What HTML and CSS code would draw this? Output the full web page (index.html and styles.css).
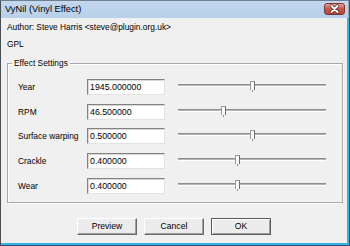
FILE: index.html
```html
<!DOCTYPE html>
<html lang="en">
<head>
    <meta charset="UTF-8">
    <title>VyNil (Vinyl Effect)</title>
    <link rel="stylesheet" href="styles.css">
</head>
<body>
    <div class="frame">
        <div class="titlebar">
            <span class="title">VyNil (Vinyl Effect)</span>
            <span class="close">
                <svg width="21" height="12" viewBox="0 0 21 12">
                    <path d="M7.5 3 L13.5 9 M13.5 3 L7.5 9" stroke="#5a2a26" stroke-width="3.4" stroke-linecap="round"/>
                    <path d="M7.5 3 L13.5 9 M13.5 3 L7.5 9" stroke="#ffffff" stroke-width="2" stroke-linecap="round"/>
                </svg>
            </span>
        </div>

        <div class="client">
            <div class="info">Author: Steve Harris &lt;steve@plugin.org.uk&gt;</div>
            <div class="info">GPL</div>

            <fieldset class="group">
                <legend>Effect Settings</legend>

                <div class="row">
                    <label>Year</label>
                    <div class="edit">1945.000000</div>
                    <div class="slider"><div class="track"></div><div class="thumb" style="left: 72px"></div></div>
                </div>
                <div class="row">
                    <label>RPM</label>
                    <div class="edit">46.500000</div>
                    <div class="slider"><div class="track"></div><div class="thumb" style="left: 43px"></div></div>
                </div>
                <div class="row">
                    <label>Surface warping</label>
                    <div class="edit">0.500000</div>
                    <div class="slider"><div class="track"></div><div class="thumb" style="left: 72px"></div></div>
                </div>
                <div class="row">
                    <label>Crackle</label>
                    <div class="edit">0.400000</div>
                    <div class="slider"><div class="track"></div><div class="thumb" style="left: 57px"></div></div>
                </div>
                <div class="row">
                    <label>Wear</label>
                    <div class="edit">0.400000</div>
                    <div class="slider"><div class="track"></div><div class="thumb" style="left: 57px"></div></div>
                </div>
            </fieldset>

            <div class="buttons">
                <button class="btn">Preview</button>
                <button class="btn">Cancel</button>
                <button class="btn default">OK</button>
            </div>
        </div>
    </div>
</body>
</html>
```

FILE: styles.css
```css
body {
    margin: 0;
    font-family: "Liberation Sans", Arial, sans-serif;
    font-size: 8.4px;
    color: #000;
    background: #f0f0f0;
}

.frame {
    width: 350px;
    height: 246px;
    box-sizing: border-box;
    border-left: 1px solid #4a4f55;
    border-top: 1px solid #6f7f90;
    border-right: 1px solid #2a5570;
    border-bottom: 1px solid #2a5570;
    display: flex;
    flex-direction: column;
}

.titlebar {
    height: 17px;
    display: flex;
    align-items: center;
    justify-content: space-between;
    padding: 0 3px 0 4px;
    background: linear-gradient(to bottom, #c3d7ee, #b8d0ea);
    border-right: 1px solid #98a8ba;
}

.title {
    font-size: 9.3px;
    margin-top: -1px;
}

.close {
    width: 21px;
    height: 12px;
    border-radius: 3px;
    border: 1px solid #7c3530;
    box-sizing: border-box;
    background: linear-gradient(to bottom, #e4a198, #c85a4e 45%, #b84437);
    display: flex;
    align-items: center;
    justify-content: center;
    margin-top: -1px;
}

.close svg {
    display: block;
    margin: -1px;
}

.client {
    flex: 1;
    padding: 0 4px 0 6px;
    background: #f0f0f0;
    border-right: 2px solid #33b2e3;
    border-bottom: 2px solid #33b2e3;
}

.info {
    line-height: 12px;
    margin-top: 3px;
}

.info + .info {
    margin-top: 5px;
}

.group {
    margin: 7px 0 0 0;
    padding: 6px 4px 4px 4px;
    border: 1px solid #a9a9a9;
    box-shadow: inset 1px 1px 0 #fff, 1px 1px 0 #fff;
}

.group legend {
    padding: 0 2px;
    line-height: 12px;
}

.row {
    height: 24.6px;
    display: flex;
    align-items: center;
    padding-left: 6px;
}

.row label {
    width: 69px;
}

.edit {
    width: 78px;
    height: 16px;
    box-sizing: border-box;
    background: #fff;
    border-top: 1px solid #828282;
    border-left: 1px solid #828282;
    border-right: 1px solid #e3e3e3;
    border-bottom: 1px solid #e3e3e3;
    box-shadow: inset 1px 1px 0 #d8d8d8;
    padding: 0 2px;
    line-height: 14px;
    font-size: 8.8px;
}

.slider {
    position: relative;
    width: 148px;
    height: 16px;
    margin-left: 13px;
}

.track {
    position: absolute;
    left: 0;
    right: 0;
    top: 5px;
    height: 1px;
    border-top: 1px solid #8e8e8e;
    border-bottom: 1px solid #ffffff;
    background: #b4b4b4;
}

.thumb {
    position: absolute;
    top: 2px;
    width: 3px;
    height: 8px;
    background: #fafafa;
    border: 1px solid #9a9a9a;
    border-right-color: #6e6e6e;
    border-bottom: none;
}

.thumb::after {
    content: "";
    position: absolute;
    left: 1px;
    top: 8px;
    width: 1px;
    height: 2px;
    background: #8a8a8a;
}

.buttons {
    display: flex;
    justify-content: center;
    gap: 7px;
    margin-top: 15px;
    padding-right: 2px;
}

.btn {
    width: 60px;
    height: 17px;
    padding: 0;
    font-family: inherit;
    font-size: 8.6px;
    color: #000;
    background: #ececec;
    border-top: 1px solid #ffffff;
    border-left: 1px solid #ffffff;
    border-right: 1px solid #6a6a6a;
    border-bottom: 1px solid #6a6a6a;
    box-shadow: inset -1px -1px 0 #a0a0a0;
}

.btn.default {
    border: 1px solid #5a5a5a;
    box-shadow: inset 1px 1px 0 #fff, inset -1px -1px 0 #a0a0a0;
}
```
